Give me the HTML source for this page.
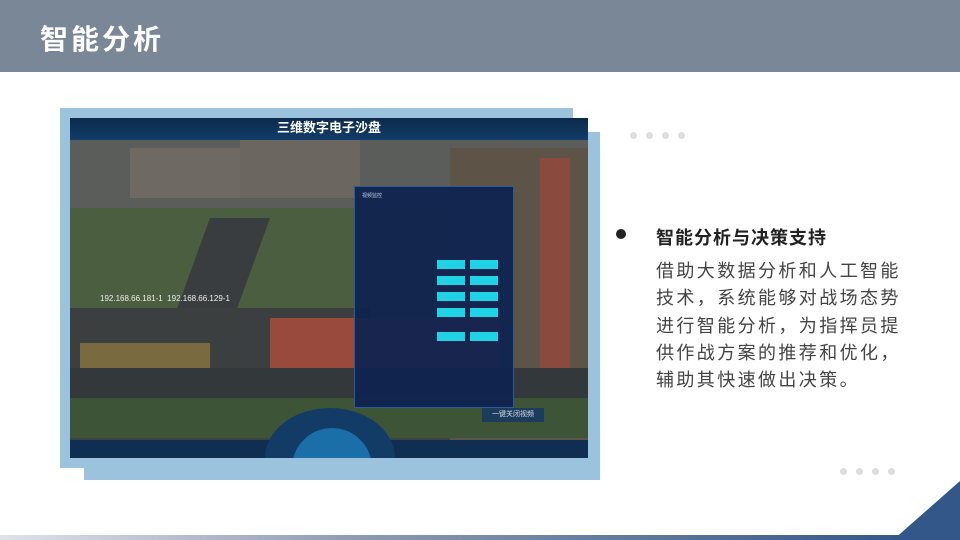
<!DOCTYPE html>
<html><head><meta charset="utf-8"><style>
*{margin:0;padding:0;box-sizing:border-box}
body{width:960px;height:540px;background:#fff;position:relative;overflow:hidden;font-family:"Liberation Sans","Noto Sans CJK SC",sans-serif}
.hdr{position:absolute;left:0;top:0;width:960px;height:72px;background:#7a8797}
.hdr h1{position:absolute;left:40px;top:18px;color:#fff;font-size:28px;font-weight:bold;letter-spacing:3px}
.r1{position:absolute;left:60px;top:108px;width:513px;height:360px;background:#9cc3de}
.r2{position:absolute;left:84px;top:132px;width:516px;height:348px;background:#9cc3de}
.shot{position:absolute;left:70px;top:118px;width:518px;height:340px;background:#3c4442;overflow:hidden}
.shot div{position:absolute}
.b{width:28px;height:9px;background:#1ed3e6}
.dots span{position:absolute;width:7px;height:7px;border-radius:50%;background:#ddd}
.txt{position:absolute;left:656px;top:224px;color:#333}
.txt h2{font-size:18px;font-weight:bold;color:#222;margin-bottom:8px;letter-spacing:1px}
.txt p{font-size:18px;line-height:27.3px;color:#444;width:252px;letter-spacing:2.4px}
.bul{position:absolute;left:616px;top:229px;width:10px;height:10px;border-radius:50%;background:#222}
.line{position:absolute;left:0;top:535px;width:900px;height:5px;background:linear-gradient(90deg,#dfe3ea,#8d9ab0 40%,#34578a)}
</style></head><body>
<div class="hdr"><h1>智能分析</h1></div>
<div class="r2"></div><div class="r1"></div>
<div class="shot">
 <div style="left:0;top:0;width:518px;height:110px;background:#5a5d5a"></div>
 <div style="left:170px;top:20px;width:120px;height:60px;background:#6b6660"></div>
 <div style="left:60px;top:30px;width:110px;height:50px;background:#6e6a63"></div>
 <div style="left:380px;top:30px;width:138px;height:300px;background:#5d5346"></div>
 <div style="left:470px;top:40px;width:30px;height:250px;background:#8a4a3e"></div>
 <div style="left:0;top:90px;width:380px;height:110px;background:#4b5e3f"></div>
 <div style="left:120px;top:100px;width:60px;height:110px;background:#3a3d3f;transform:skewX(-20deg)"></div>
 <div style="left:0;top:190px;width:300px;height:60px;background:#3b3f40"></div>
 <div style="left:200px;top:200px;width:230px;height:50px;background:#9a4a3c"></div>
 <div style="left:10px;top:225px;width:130px;height:30px;background:#7a6a40"></div>
 <div style="left:0;top:250px;width:518px;height:40px;background:#33393a"></div>
 <div style="left:0;top:280px;width:518px;height:40px;background:#3d5436"></div>
 <div style="left:0;top:0;width:518px;height:22px;background:linear-gradient(#0c2a4c,#123d6a);text-align:center;color:#fff;font-weight:bold;font-size:13px;line-height:20px">三维数字电子沙盘</div>
 <div style="left:284px;top:68px;width:160px;height:222px;background:rgba(14,34,80,.93);border:1px solid #2b5aa0"></div>
 <div style="left:292px;top:74px;color:#bcd;font-size:5px">视频监控</div>
 <div class="b" style="left:367px;top:142px"></div><div class="b" style="left:400px;top:142px"></div>
 <div class="b" style="left:367px;top:158px"></div><div class="b" style="left:400px;top:158px"></div>
 <div class="b" style="left:367px;top:174px"></div><div class="b" style="left:400px;top:174px"></div>
 <div class="b" style="left:367px;top:190px"></div><div class="b" style="left:400px;top:190px"></div>
 <div class="b" style="left:367px;top:214px"></div><div class="b" style="left:400px;top:214px"></div>
 <div style="left:30px;top:176px;color:#eee;font-size:8px">192.168.66.181-1 &nbsp;192.168.66.129-1</div>
 <div style="left:0;top:322px;width:518px;height:18px;background:#0f2e52"></div>
 <div style="left:195px;top:290px;width:130px;height:100px;border-radius:50%;background:#123c66"></div>
 <div style="left:222px;top:310px;width:80px;height:80px;border-radius:50%;background:#1b6fa8"></div>
 <div style="left:412px;top:290px;width:62px;height:14px;background:#1c3c5c;color:#dde;font-size:7px;line-height:14px;text-align:center">一键关闭视频</div>
</div>
<div class="dots"><span style="left:630px;top:132px"></span><span style="left:646px;top:132px"></span><span style="left:662px;top:132px"></span><span style="left:678px;top:132px"></span>
<span style="left:840px;top:468px"></span><span style="left:856px;top:468px"></span><span style="left:872px;top:468px"></span><span style="left:888px;top:468px"></span></div>
<div class="bul"></div>
<div class="txt"><h2>智能分析与决策支持</h2><p>借助大数据分析和人工智能技术，系统能够对战场态势进行智能分析，为指挥员提供作战方案的推荐和优化，辅助其快速做出决策。</p></div>
<div class="line"></div>
<svg style="position:absolute;left:0;top:0" width="960" height="540"><polygon points="960,481 960,540 893,540" fill="#34578a"/></svg>
</body></html>
